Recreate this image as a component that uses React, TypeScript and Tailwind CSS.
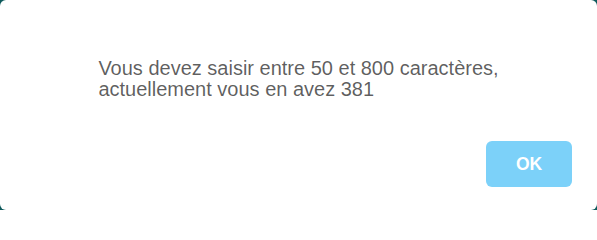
import React from "react";

export default function App() {
  return (
    <div className="w-[597px] h-[210px] bg-[#0e5a5c]" style={{ fontFamily: '"Liberation Sans", Arial, sans-serif' }}>
      <div className="w-full h-full bg-white rounded-[6px] flex flex-col">
        <div className="flex justify-center mt-[58px]">
          <div className="inline-block text-left text-[20px] leading-[21px] text-[rgba(0,0,0,0.64)]">
            Vous devez saisir entre 50 et 800 caractères,
            <br />
            actuellement vous en avez 381
          </div>
        </div>
        <div className="mt-auto flex justify-end pr-[25px] pb-[23px]">
          <button className="w-[86px] h-[46px] rounded-[6px] bg-[#7cd1f9] text-white font-bold text-[17.5px] leading-[21px] flex items-center justify-center">
            OK
          </button>
        </div>
      </div>
    </div>
  );
}
